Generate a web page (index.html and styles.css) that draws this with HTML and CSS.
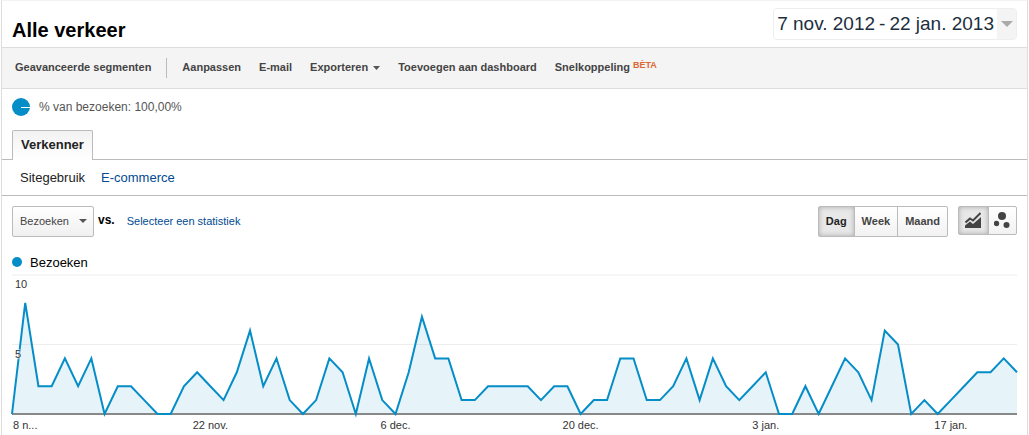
FILE: index.html
```html
<!DOCTYPE html>
<html lang="nl">
<head>
  <meta charset="UTF-8">
  <meta name="viewport" content="width=device-width, initial-scale=1.0">
  <title>Alle verkeer</title>
  <link rel="stylesheet" href="styles.css">
</head>
<body>
<main class="report">

  <header class="report-header">
    <h1>Alle verkeer</h1>
    <button type="button" class="date-range">
      <span class="date-text"><span>7 nov. 2012</span> <span>-</span> <span>22 jan. 2013</span></span>
      <span class="date-arrow"><svg width="12" height="6" viewBox="0 0 12 6"><path d="M0 0h12L6 6z" fill="#aaa"/></svg></span>
    </button>
  </header>

  <div class="toolbar">
    <button type="button">Geavanceerde segmenten</button>
    <span class="separator"></span>
    <button type="button">Aanpassen</button>
    <button type="button">E-mail</button>
    <button type="button">Exporteren <svg width="7" height="4" viewBox="0 0 7 4"><path d="M0 0h7L3.5 4z" fill="#555"/></svg></button>
    <button type="button">Toevoegen aan dashboard</button>
    <button type="button">Snelkoppeling <span class="beta">BÈTA</span></button>
  </div>

  <div class="segment">
    <svg width="18" height="18" viewBox="0 0 18 18"><circle cx="9" cy="9" r="9" fill="#058dc7"/><path d="M9 9.500h9" stroke="#fff"/></svg>
    <span>% van bezoeken: 100,00%</span>
  </div>

  <nav class="tabs">
    <a href="#" class="tab">Verkenner</a>
  </nav>

  <nav class="subtabs">
    <a href="#" class="current">Sitegebruik</a>
    <a href="#">E-commerce</a>
  </nav>

  <div class="controls">
    <div class="metric">
      <select class="metric-select" aria-label="Statistiek">
        <option>Bezoeken</option>
      </select>
      <svg class="select-arrow" width="8" height="4" viewBox="0 0 8 4"><path d="M0 0h8L4 4z" fill="#555"/></svg>
    </div>
    <span class="vs">vs.</span>
    <a href="#" class="compare">Selecteer een statistiek</a>

    <div class="button-group periods">
      <button type="button" class="active">Dag</button>
      <button type="button">Week</button>
      <button type="button">Maand</button>
    </div>
    <div class="button-group views">
      <button type="button" class="active" aria-label="Lijndiagram">
        <svg width="16" height="16" viewBox="0 0 16 16">
          <path d="M0.500 10.500L5 6.500L8 8.500L15.500 1" fill="none" stroke="#444" stroke-width="2"/>
          <path d="M0 16v-2.500l5-4L8 12l8-7V16z" fill="#444"/>
        </svg>
      </button>
      <button type="button" aria-label="Bewegingsdiagram">
        <svg width="16" height="16" viewBox="0 0 16 16" fill="#444">
          <circle cx="8" cy="4" r="4"/>
          <circle cx="2.500" cy="11.500" r="2.700"/>
          <circle cx="12.500" cy="13" r="3"/>
        </svg>
      </button>
    </div>
  </div>

  <div class="legend"><span class="dot"></span>Bezoeken</div>

  <!-- 77 dagen, 0 t/m 10 bezoeken -->
  <div class="chart">
    <svg class="plot" viewBox="0 0 76 10" preserveAspectRatio="none">
      <path class="grid" d="M0 0H76M0 5H76"/>
      <polygon class="area" points="0,10 1,2 2,8 3,8 4,6 5,8 6,6 7,10 8,8 9,8 10,9 11,10 12,10 13,8 14,7 15,8 16,9 17,7 18,4 19,8 20,6 21,9 22,10 23,9 24,6 25,7 26,10 27,6 28,9 29,10 30,7 31,3 32,6 33,6 34,9 35,9 36,8 37,8 38,8 39,8 40,9 41,8 42,8 43,10 44,9 45,9 46,6 47,6 48,9 49,9 50,8 51,6 52,9 53,6 54,8 55,9 56,8 57,7 58,10 59,10 60,8 61,10 62,8 63,6 64,7 65,9 66,4 67,5 68,10 69,9 70,10 71,9 72,8 73,7 74,7 75,6 76,7 76,10"/>
      <path class="axis" d="M0 10H76"/>
      <polyline class="line" points="0,10 1,2 2,8 3,8 4,6 5,8 6,6 7,10 8,8 9,8 10,9 11,10 12,10 13,8 14,7 15,8 16,9 17,7 18,4 19,8 20,6 21,9 22,10 23,9 24,6 25,7 26,10 27,6 28,9 29,10 30,7 31,3 32,6 33,6 34,9 35,9 36,8 37,8 38,8 39,8 40,9 41,8 42,8 43,10 44,9 45,9 46,6 47,6 48,9 49,9 50,8 51,6 52,9 53,6 54,8 55,9 56,8 57,7 58,10 59,10 60,8 61,10 62,8 63,6 64,7 65,9 66,4 67,5 68,10 69,9 70,10 71,9 72,8 73,7 74,7 75,6 76,7"/>
    </svg>
    <div class="y-labels">
      <span>10</span>
      <span>5</span>
    </div>
  </div>
  <div class="x-labels">
    <span>8 n...</span>
    <span>22 nov.</span>
    <span>6 dec.</span>
    <span>20 dec.</span>
    <span>3 jan.</span>
    <span>17 jan.</span>
  </div>

</main>
</body>
</html>
```
FILE: styles.css
```css
* {
  box-sizing: border-box;
}

body {
  margin: 0;
  background: #fff;
  font-family: "Liberation Sans", Arial, sans-serif;
  font-size: 11px;
  color: #333;
}

button, select {
  font-family: inherit;
  font-size: 11px;
  margin: 0;
  padding: 0;
  border: none;
  background: none;
  cursor: pointer;
}

a {
  color: #004b91;
  text-decoration: none;
}

.report {
  margin: 0 1px;
  border: 1px solid #ddd;
  border-top-color: #f2f2f2;
  border-bottom: none;
}

.report-header {
  display: flex;
  justify-content: space-between;
  align-items: flex-start;
  height: 46px;
  padding: 7px 10px 0;
}

h1 {
  margin: 10px 0 0;
  font-size: 20px;
  line-height: 24px;
  color: #000;
}

.date-range {
  display: flex;
  height: 32px;
  border: 1px solid #eee;
  border-radius: 4px;
  overflow: hidden;
}

.date-text {
  display: flex;
  gap: 4px;
  padding: 0 3px;
  font-size: 19px;
  line-height: 30px;
  color: #1d2f40;
}

.date-arrow {
  display: flex;
  align-items: center;
  justify-content: center;
  width: 19px;
  height: 100%;
  background: #f4f4f4;
}

.toolbar {
  display: flex;
  align-items: center;
  gap: 18px;
  height: 42px;
  padding: 0 13px;
  background: #f4f4f4;
  border-top: 1px solid #ddd;
  border-bottom: 1px solid #ddd;
}

.toolbar button {
  padding-bottom: 2px;
  font-weight: bold;
  color: #444;
}

.toolbar button svg {
  margin-left: 2px;
  vertical-align: 1px;
}

.separator {
  width: 1px;
  height: 20px;
  margin: 0 -3px;
  background: #bbb;
}

.beta {
  font-size: 9px;
  line-height: 9px;
  vertical-align: 3px;
  color: #dd6633;
}

.segment {
  display: flex;
  align-items: center;
  gap: 9px;
  height: 35px;
  padding-left: 10px;
  font-size: 12px;
  color: #555;
}

.tabs {
  display: flex;
  height: 36px;
  padding: 6px 10px 0;
  border-bottom: 1px solid #bbb;
}

.tab {
  height: 30px;
  padding: 0 8px;
  border: 1px solid #bbb;
  border-bottom: none;
  border-radius: 2px 2px 0 0;
  background: linear-gradient(#f2f2f2, #fff);
  font-size: 13px;
  font-weight: bold;
  line-height: 28px;
  color: #222;
}

.subtabs {
  display: flex;
  align-items: center;
  gap: 16px;
  height: 36px;
  padding-left: 18px;
  border-bottom: 1px solid #bbb;
  font-size: 13px;
}

.subtabs .current {
  color: #222;
}

.controls {
  display: flex;
  align-items: flex-start;
  padding: 10px 10px 0;
  line-height: 30px;
}

.metric {
  position: relative;
}

.metric-select {
  display: block;
  appearance: none;
  width: 82px;
  height: 31px;
  padding: 0 7px 2px;
  border: 1px solid #bbb;
  border-radius: 2px;
  background: linear-gradient(#fff, #f0f0f0);
  color: #444;
}

.select-arrow {
  position: absolute;
  right: 7px;
  top: 13px;
  pointer-events: none;
}

.vs {
  margin: 0 12px 0 4px;
  font-size: 12px;
  font-weight: bold;
  line-height: 28px;
  color: #000;
}

.button-group {
  display: flex;
  height: 31px;
  border: 1px solid #bbb;
  border-radius: 2px;
  background: linear-gradient(#fff, #f2f2f2);
}

.button-group button {
  padding: 0 7px 2px;
  font-weight: bold;
  color: #444;
}

.button-group button + button {
  border-left: 1px solid #bbb;
}

.button-group .active {
  background: #e8e8e8;
  box-shadow: inset 0 0 5px #aaa;
  color: #222;
}

.periods {
  margin-left: auto;
}

.views {
  height: 29px;
  margin-left: 10px;
}

.views button {
  width: 29px;
  padding: 0 5px 2px 6px;
}

.views button + button {
  width: 28px;
  padding-left: 5px;
}

.views svg {
  display: block;
}

.legend {
  display: flex;
  align-items: center;
  gap: 8px;
  height: 38px;
  padding: 12px 10px 0;
  font-size: 13px;
  color: #000;
}

.dot {
  width: 10px;
  height: 10px;
  border-radius: 50%;
  background: #058dc7;
}

.chart {
  position: relative;
  margin: 0 10px;
}

.plot {
  display: block;
  width: 100%;
  height: 139px;
  overflow: visible;
}

.plot * {
  vector-effect: non-scaling-stroke;
}

.grid {
  stroke: #eee;
  stroke-width: 1px;
}

.area {
  fill: #058dc7;
  fill-opacity: 0.1;
}

.axis {
  stroke: #888;
  stroke-width: 2px;
}

.line {
  fill: none;
  stroke: #058dc7;
  stroke-width: 2px;
}

/* labels op de grafiek, elk onder zijn rasterlijn */
.y-labels {
  position: absolute;
  inset: 0;
  display: grid;
  grid-template-rows: 1fr 1fr;
  padding-left: 3px;
  line-height: 18px;
  text-shadow: 0 0 1px #fff, 0 0 2px #fff, 0 0 2px #fff, 0 0 2px #fff;
}

.x-labels {
  display: grid;
  grid-template-columns: 8fr repeat(4, 14fr) 2fr 10fr;
  margin: 0 10px;
  padding-top: 1px;
  line-height: 20px;
  text-align: center;
}

.x-labels span:first-child {
  padding-left: 1px;
  text-align: left;
}

.x-labels span:last-child {
  grid-column: 7;
}
```
